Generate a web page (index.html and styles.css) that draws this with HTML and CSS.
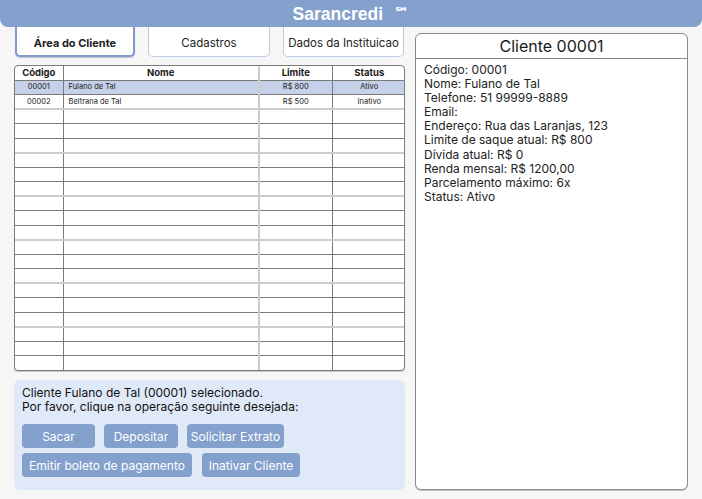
FILE: index.html
```html
<!DOCTYPE html>
<html lang="pt-BR">
<head>
<meta charset="utf-8">
<title>Sarancredi</title>
<link rel="stylesheet" href="styles.css">
</head>
<body>
<header class="topbar"><h1 class="brand">Sarancredi<sup class="sm">℠</sup></h1></header>
<main class="layout">
  <section class="left">
    <nav class="tabs">
      <button class="tab active">Área do Cliente</button>
      <button class="tab tab2">Cadastros</button>
      <button class="tab tab3">Dados da Instituicao</button>
    </nav>
    <div class="table-wrap">
      <table class="grid">
        <colgroup><col class="c1"><col class="c2"><col class="c3"><col class="c4"></colgroup>
        <thead><tr><th>Código</th><th>Nome</th><th>Limite</th><th>Status</th></tr></thead>
        <tbody>
          <tr class="sel"><td class="ctr">00001</td><td>Fulano de Tal</td><td class="ctr">R$ 800</td><td class="ctr">Ativo</td></tr>
          <tr><td class="ctr">00002</td><td>Beltrana de Tal</td><td class="ctr">R$ 500</td><td class="ctr">Inativo</td></tr>
          <tr><td></td><td></td><td></td><td></td></tr>
          <tr><td></td><td></td><td></td><td></td></tr>
          <tr><td></td><td></td><td></td><td></td></tr>
          <tr><td></td><td></td><td></td><td></td></tr>
          <tr><td></td><td></td><td></td><td></td></tr>
          <tr><td></td><td></td><td></td><td></td></tr>
          <tr><td></td><td></td><td></td><td></td></tr>
          <tr><td></td><td></td><td></td><td></td></tr>
          <tr><td></td><td></td><td></td><td></td></tr>
          <tr><td></td><td></td><td></td><td></td></tr>
          <tr><td></td><td></td><td></td><td></td></tr>
          <tr><td></td><td></td><td></td><td></td></tr>
          <tr><td></td><td></td><td></td><td></td></tr>
          <tr><td></td><td></td><td></td><td></td></tr>
          <tr><td></td><td></td><td></td><td></td></tr>
          <tr><td></td><td></td><td></td><td></td></tr>
          <tr><td></td><td></td><td></td><td></td></tr>
          <tr><td></td><td></td><td></td><td></td></tr>
        </tbody>
      </table>
    </div>
    <div class="ops">
      <p class="msg">Cliente Fulano de Tal (00001) selecionado.<br>Por favor, clique na operação seguinte desejada:</p>
      <div class="btn-row">
        <button class="btn w-sacar">Sacar</button>
        <button class="btn w-dep">Depositar</button>
        <button class="btn w-ext">Solicitar Extrato</button>
      </div>
      <div class="btn-row">
        <button class="btn w-bol">Emitir boleto de pagamento</button>
        <button class="btn w-ina">Inativar Cliente</button>
      </div>
    </div>
  </section>
  <aside class="detail">
    <h2 class="detail-title">Cliente 00001</h2>
    <div class="detail-body">
      <div>Código: 00001</div>
      <div>Nome: Fulano de Tal</div>
      <div>Telefone: 51 99999-8889</div>
      <div>Email:</div>
      <div>Endereço: Rua das Laranjas, 123</div>
      <div>Limite de saque atual: R$ 800</div>
      <div>Dívida atual: R$ 0</div>
      <div>Renda mensal: R$ 1200,00</div>
      <div>Parcelamento máximo: 6x</div>
      <div>Status: Ativo</div>
    </div>
  </aside>
</main>
</body>
</html>
```

FILE: styles.css
```css
* { box-sizing: border-box; }
html, body { margin: 0; padding: 0; }
body {
  background: #f6f6f6;
  font-family: Inter, "Noto Sans", sans-serif;
  color: #1a1a1a;
  width: 702px;
  height: 499px;
  overflow: hidden;
}
.topbar {
  height: 27px;
  background: #84a0cd;
  border-radius: 0 0 8px 8px;
  display: flex;
  align-items: center;
  justify-content: center;
  position: relative;
  z-index: 2;
}
.brand {
  margin: 0;
  color: #fff;
  font-family: "Liberation Sans", Arial, sans-serif;
  font-size: 17.5px;
  font-weight: 700;
  line-height: 27px;
  padding-left: 0;
}
.sm {
  font-family: "DejaVu Sans", sans-serif;
  font-size: 15px;
  font-weight: 700;
  vertical-align: 2px;
  margin-left: 11px;
}
.layout {
  display: flex;
  padding: 0 14px 0 14px;
  gap: 10px;
}
.left {
  width: 391px;
  display: flex;
  flex-direction: column;
}
.tabs {
  display: flex;
  gap: 13px;
  padding-left: 1px;
  height: 30px;
}
.tab {
  font-family: Inter, sans-serif;
  font-size: 11.5px;
  color: #222;
  background: #fff;
  border: 1px solid #bccbe6;
  border-top: none;
  border-radius: 0 0 5px 5px;
  height: 30px;
  padding: 0;
  padding-top: 3px;
}
.tab.active {
  width: 120px;
  font-weight: 700;
  font-size: 11px;
  border: 2px solid #7f9ccb;
  border-top: none;
  box-shadow: 0 1px 1px rgba(80,100,140,0.35);
}
.tab2 { width: 122px; }
.tab3 { width: 121px; }
.table-wrap {
  margin-top: 8px;
  height: 306px;
  border: 1px solid #7a7a7a;
  border-radius: 4px;
  background: #fff;
  overflow: hidden;
  box-shadow: 0 1px 0 #c8c8c8;
}
.grid {
  width: 100%;
  height: 100%;
  border-collapse: collapse;
  table-layout: fixed;
  font-size: 7.5px;
}
.c1 { width: 48px; }
.c2 { width: 196px; }
.c3 { width: 73px; }
.c4 { width: 74px; }
.grid th {
  font-size: 9.5px;
  font-weight: 700;
  height: 14px;
  padding: 0;
  border-bottom: 1px solid #7a7a7a;
  border-left: 1px solid #7a7a7a;
  line-height: 12px;
}
.grid td {
  padding: 0 0 0 5px;
  border-top: 1px solid #7a7a7a;
  border-left: 1px solid #7a7a7a;
  height: 14.5px;
  line-height: 12px;
}
.grid th:first-child, .grid td:first-child { border-left: none; }
.grid th:nth-child(3), .grid td:nth-child(3) { border-left: 2px solid #cdcdcd; }
.grid tbody tr:nth-child(3n) td { border-top: 2px solid #cdcdcd; }
.grid td.ctr { text-align: center; padding: 0; }
.grid tr.sel td { background: #c4d1e8; }
.ops {
  margin-top: 9px;
  background: #e0e9f7;
  border-radius: 6px;
  padding: 6px 8px 12px;
  height: 110px;
}
.msg {
  margin: 0 0 10px;
  font-size: 12px;
  line-height: 14px;
  color: #111;
}
.btn-row {
  display: flex;
  gap: 9px;
  margin-bottom: 5px;
}
.btn {
  font-family: Inter, sans-serif;
  font-size: 12px;
  color: #fff;
  background: #84a0cd;
  border: none;
  border-radius: 4px;
  height: 24px;
  padding: 0;
}
.w-sacar { width: 73px; }
.w-dep { width: 74px; }
.w-ext { width: 97px; }
.w-bol { width: 170px; margin-right: 1px; }
.w-ina { width: 98px; }
.detail {
  margin-top: 6px;
  width: 273px;
  height: 457px;
  background: #fff;
  border: 1px solid #8a8a8a;
  border-radius: 6px;
  box-shadow: 0 1px 0 #c0c0c0;
}
.detail-title {
  margin: 0;
  font-size: 16px;
  font-weight: 400;
  text-align: center;
  height: 25px;
  line-height: 24px;
  border-bottom: 1px solid #8a8a8a;
  color: #1a1a1a;
}
.detail-body {
  padding: 4px 8px;
  font-size: 12px;
  line-height: 14.1px;
  color: #222;
}
```
